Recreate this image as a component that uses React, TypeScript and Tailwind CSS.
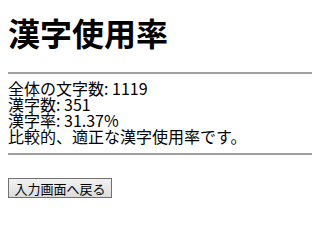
import React from 'react';

const App: React.FC = () => {
  return (
    <div
      className="min-h-[222px] bg-white px-2 pt-4 text-black"
      style={{ fontFamily: '"Noto Sans CJK JP", "Noto Sans", sans-serif' }}
    >
      <h1 className="text-[32px] font-bold leading-8">漢字使用率</h1>

      <div className="mt-6 h-[2px] bg-[#a0a0a0]" />

      <div className="mt-[6px] text-[16px] leading-4">
        全体の文字数: 1119
        <br />
        漢字数: 351
        <br />
        漢字率: 31.37%
        <br />
        比較的、適正な漢字使用率です。
      </div>

      <div className="mt-[9px] h-[2px] bg-[#a0a0a0]" />

      <button
        type="button"
        className="mt-[23px] h-5 w-[104px] border border-[#707070] bg-gradient-to-b from-[#f2f2f2] to-[#dcdcdc] text-[13px] leading-none text-black"
      >
        入力画面へ戻る
      </button>
    </div>
  );
};

export default App;
